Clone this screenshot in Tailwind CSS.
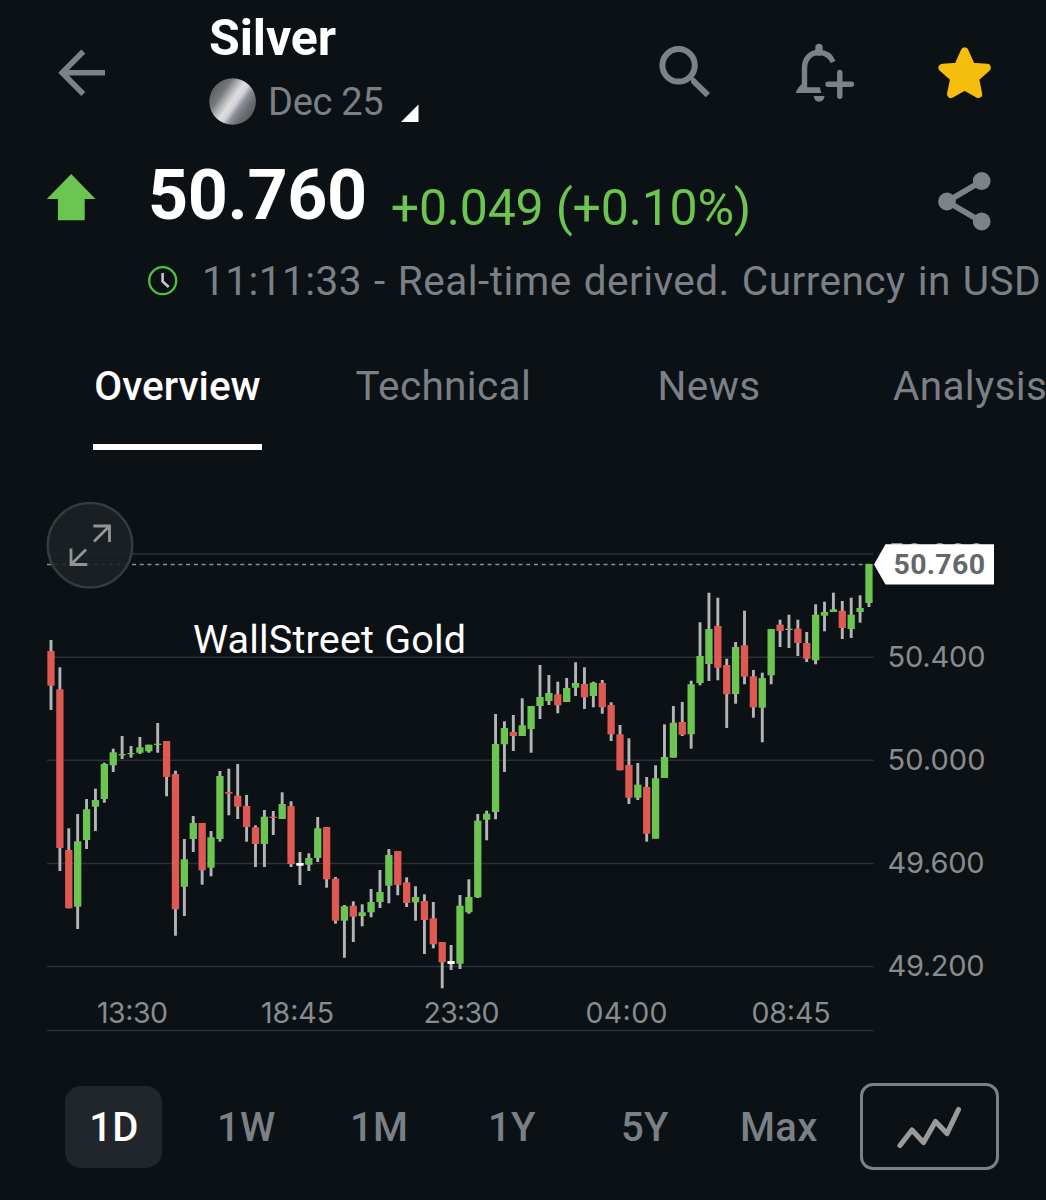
<!DOCTYPE html>
<html lang="en">
<head>
<meta charset="utf-8">
<title>Silver Dec 25</title>
<script src="https://cdn.jsdelivr.net/npm/@tailwindcss/browser@4"></script>
</head>
<body class="bg-[#0c1115] overflow-hidden">
<main class="w-[1046px] h-[1200px] overflow-hidden bg-[#0c1115] font-['Roboto',sans-serif] text-[#7b8086] whitespace-nowrap flex flex-col">

  <header class="h-[154px] shrink-0 flex items-start border-b border-[#0a0e12]">
    <svg class="ml-[56px] mt-[46px] w-[52px] h-[54px] shrink-0" viewBox="56 46 52 54" fill="none" stroke="#7d8288" stroke-width="5.6"><path d="M105 72.7H63M83.300 51.500 62.200 72.700 83.300 93.900"/></svg>
    <div class="ml-[101px] mt-[13px] w-[230px] flex flex-col">
      <h1 class="text-[50px] leading-[50px] font-bold text-white tracking-[-0.100px]">Silver</h1>
      <div class="flex items-start mt-[13px]">
        <svg class="w-[48px] h-[50px] shrink-0" viewBox="209 76 48 50">
          <defs><linearGradient id="metal" x1="0.1" y1="0.22" x2="0.9" y2="0.78"><stop offset="0" stop-color="#5d6265"/><stop offset=".2" stop-color="#74787a"/><stop offset=".36" stop-color="#b5b6b8"/><stop offset=".48" stop-color="#dedee0"/><stop offset=".58" stop-color="#d2d2d8"/><stop offset=".7" stop-color="#8d8e9b"/><stop offset=".84" stop-color="#6d7174"/><stop offset="1" stop-color="#5c6063"/></linearGradient></defs>
          <circle cx="232.600" cy="101.500" r="23.300" fill="url(#metal)"/>
        </svg>
        <span class="ml-[11px] mt-[5px] text-[38px] leading-[42px] tracking-[-0.300px]">Dec 25</span>
        <svg class="ml-auto mr-[19px] mt-[28px] w-[19px] h-[19px] shrink-0" viewBox="401 104 19 19"><path d="M418.500 104.500V122H401z" fill="#fff"/></svg>
      </div>
    </div>
    <svg class="ml-[217px] mt-[42px] w-[60px] h-[60px] shrink-0" viewBox="656 42 60 60" fill="none" stroke="#7d8288"><circle cx="678.600" cy="65.300" r="16.200" stroke-width="6"/><path d="M690.500 78.500 694 77.500 710 93 705.800 97.200 691.500 83.200z" fill="#7d8288" stroke="none"/></svg>
    <svg class="ml-[76px] mt-[40px] w-[66px] h-[66px] shrink-0" viewBox="792 40 66 66" fill="none" stroke="#7d8288">
      <path d="M804.500 88V68C804.500 59 810 52.500 819 52.500C825.500 52.500 830.500 56 833 62" stroke-width="5.400"/>
      <path d="M819 52V47.500" stroke-width="7.400" stroke-linecap="round"/>
      <path d="M802 84 807.200 87.200H819.800L821.300 93H796C796.300 89.500 799 86.500 802 84z" fill="#7d8288" stroke="none"/>
      <path d="M813.800 96H824.500C824.300 99.500 822 101.700 819.100 101.700C816.200 101.700 814 99.500 813.800 96z" fill="#7d8288" stroke="none"/>
      <path d="M828 84.200H851.500M839.800 72.500V96.300" stroke-width="5.400" stroke-linecap="round"/>
    </svg>
    <svg class="ml-[76px] mt-[42px] w-[62px] h-[62px] shrink-0" viewBox="934 42 62 62"><path d="M964.700 51.500 971.500 66.800 986.800 67.700 975 78.300 978.200 94 964.700 86.300 951 94 954.300 78.300 942.500 67.700 957.800 66.800z" fill="#f5bd0c" stroke="#f5bd0c" stroke-width="8" stroke-linejoin="round"/></svg>
  </header>

  <section class="h-[180px] shrink-0 flex flex-col">
    <div class="h-[94px] flex items-start">
      <svg class="ml-[46px] mt-[18px] w-[52px] h-[52px] shrink-0" viewBox="46 172 52 52"><path d="M71.200 174 95.500 199H84.700V220.300H57.900V199H46.800z" fill="#6cc550"/></svg>
      <span class="ml-[50px] mt-[6px] text-[70px] leading-[70px] font-bold text-white tracking-[-0.400px]">50.760</span>
      <span class="ml-[24px] mt-[24px] text-[50px] leading-[60px] tracking-[-0.200px] text-[#6cc550]">+0.049 (+0.10%)</span>
      <svg class="ml-auto mr-[52px] mt-[16px] w-[60px] h-[62px] shrink-0" viewBox="934 170 60 62" fill="#7d8288"><path d="M982 181 947 201.500 982 222" fill="none" stroke="#7d8288" stroke-width="5.600"/><circle cx="981.700" cy="181" r="8.900"/><circle cx="947" cy="201.500" r="8.900"/><circle cx="981.700" cy="221.500" r="8.900"/></svg>
    </div>
    <div class="h-[66px] flex items-center">
      <svg class="ml-[147px] w-[32px] h-[32px] shrink-0" viewBox="147 265 32 32" fill="none"><circle cx="162.700" cy="280.700" r="13.500" stroke="#4dc040" stroke-width="2.300"/><path d="M162.600 273V281.500L168.700 287" stroke="#c9c6cc" stroke-width="2.600"/></svg>
      <span class="ml-[23px] text-[40.500px] leading-[48px] tracking-[0.480px] [word-spacing:1.5px]">11:11:33 - Real-time derived. Currency in USD</span>
    </div>
  </section>

  <nav class="h-[130px] shrink-0 flex items-start pt-[22px] pl-[93px] text-[40.500px] leading-[61px] tracking-[0.350px]">
    <div class="w-[169px] shrink-0 h-[93.500px] border-b-[6px] border-white font-medium text-white text-center tracking-[0px]">Overview</div>
    <span class="ml-[93.500px] w-[302px] shrink-0">Technical</span>
    <span class="w-[235.500px] shrink-0">News</span>
    <span>Analysis</span>
  </nav>

  <section class="h-[596px] shrink-0">
    <svg class="w-[1046px] h-[596px]" viewBox="0 464 1046 596">
      <g stroke="#2c3135" stroke-width="1.500"><path d="M47 554H873.500M47 657.200H873.500M47 760.300H873.500M47 863.400H873.500M47 966.500H873.500"/><path d="M47 1030.500H873.500" stroke="#27323c"/></g>
      <path d="M47 564.500H873" stroke="#8b8e90" stroke-width="1.500" stroke-dasharray="4 3.730"/>
      <g id="candles"></g>
      <circle cx="90" cy="545.300" r="42.300" fill="#1c2125" fill-opacity=".88" stroke="#363b3e" stroke-width="2.500"/>
      <path d="M93.300 526H109.500V542M109.500 526 94 541.500M71 548.500V564.500H87.300M71 564.500 86 549.500" fill="none" stroke="#929596" stroke-width="2.800"/>
      <g font-family="Inter, sans-serif" font-weight="400" font-size="29" fill="#898c8f">
        <text x="887.500" y="564" textLength="98">50.800</text>
        <text x="887.500" y="667" textLength="98">50.400</text>
        <text x="887.500" y="770" textLength="98">50.000</text>
        <text x="887.500" y="873" textLength="97">49.600</text>
        <text x="887.500" y="976" textLength="97">49.200</text>
        <g font-size="28.500">
        <text x="97" y="1023" textLength="71">13:30</text>
        <text x="261" y="1023" textLength="73">18:45</text>
        <text x="423.500" y="1023" textLength="76">23:30</text>
        <text x="585.500" y="1023" textLength="82">04:00</text>
        <text x="751.500" y="1023" textLength="79">08:45</text>
        </g>
      </g>
      <path d="M874 564.500 885.500 544.300H994V584.500H885.500z" fill="#fff"/>
      <text x="893.500" y="574" textLength="91.500" font-weight="700" font-size="28.500" fill="#64686b">50.760</text>
      <text x="193" y="653" textLength="273" font-size="39.500" fill="#fff">WallStreet Gold</text>
    </svg>
  </section>

  <section class="h-[140px] shrink-0 flex items-start pt-[23px] pl-[65px] text-[40px] leading-[84px] font-medium tracking-[0.300px]">
    <div class="mt-[3px] w-[97px] h-[82px] rounded-[16px] bg-[#20262c] pl-[1px] text-white text-center">1D</div>
    <span class="mt-[3px] ml-[55px] w-[133px]">1W</span>
    <span class="mt-[3px] w-[138px]">1M</span>
    <span class="mt-[3px] w-[133px]">1Y</span>
    <span class="mt-[3px] w-[119px]">5Y</span>
    <span class="mt-[3px] w-[120px]">Max</span>
    <div class="w-[139px] h-[87px] rounded-[13px] border-[3px] border-[#7b8287] flex items-center justify-center">
      <svg class="w-[70px] h-[50px]" viewBox="895 1101 70 50" fill="none" stroke="#9b9a99" stroke-width="5.200" stroke-linecap="round" stroke-linejoin="round"><path d="M900 1144.500 912 1129 923.500 1141.500 935.500 1120.500 947 1132.500 958.500 1108.500"/></svg>
    </div>
  </section>
</main>
<script>
// [direction, high, body top, body bottom, low] for each 15-minute candle
const candles = [
['r',640,651,685.7,710],['r',667.3,689.3,848,871],['r',828.3,850,908.3,908.3],['g',814,841.3,906.7,929],['g',799,809.3,840,849],['g',788.7,800,806.7,831],['g',762.7,764,799,802.7],['g',748.7,752.3,765.3,772],['g',736,754,755.3,759],['g',746,753,754.2,757.7],['g',737,747.3,752.7,754],['g',744.7,744.7,751.3,752.7],['g',723,743.7,745,752.7],['r',741,741,777,796.3],['r',770.7,774,909.3,935.7],['g',839,859.3,886.7,916],['g',816,823,839,852],['r',823,823,870.3,884.7],['g',831,837.3,867.7,876.3],['g',771,776,839,841.7],['r',768.7,792,793.7,815.3],['r',764,795.7,806.7,819],['r',795,806,827,841.7],['r',825.3,827.3,844,867],['g',810,816.7,844,867],['r',811,816.7,818,835],['g',792.3,804,819,819],['r',801.3,806,864,867],['w',852,863,865.7,885],['g',853.3,858,864.7,871],['g',817,828.3,858,862],['r',827,827,879.3,887.7],['r',877,878.7,920.7,923.7],['g',905,906.3,920.7,957.7],['r',901.3,905.7,916.7,942],['g',904.3,912.3,916,926.3],['g',889,902,912.3,917.3],['g',870,892,902,908],['g',849,855,885.7,903.3],['r',851,851,885,895.3],['r',877.3,882.3,903,907],['g',886.3,897,902.3,920.7],['r',894.3,901,920,954],['r',902,918.3,944.3,948.3],['r',942,942,962.3,988.3],['w',945,961,964,970],['g',895,905.7,963.7,969],['g',879.3,897,912.3,913.7],['g',814,820.7,897.3,898],['g',810.7,813.7,819.7,840.3],['g',714,744,812,819.3],['g',721.3,728,744.3,772],['r',715,732,736,751],['g',698.3,725.3,736,736],['g',706,706,729,752.7],['g',665,697,706,719],['g',675,693,701,705],['r',681.7,694.3,705.3,713.3],['g',678,688,702,702],['g',662.3,683,687.7,696],['r',667.3,684,697.3,709],['g',681.7,682.7,696,707.3],['r',680,683,707.3,713.7],['r',702.3,705,734.3,741],['r',725,734.3,770.3,770.3],['r',738.3,765,797.7,804],['g',763,784.7,797.7,800],['r',777,787,833.7,841.7],['g',765.3,778.3,838.7,838.7],['g',724.3,757,778,778],['g',706,722.7,757.7,757.7],['r',702,722,734.7,736],['g',680.7,684.3,734.3,748.7],['g',622.3,656,683,685.3],['g',592.7,629,664,681],['r',597.7,626,667.7,680.3],['r',658.7,665,694.3,728],['g',642,647,694,703.7],['r',610.7,645.3,676.7,684.3],['r',670,676.3,707.3,717.7],['g',672.7,678,707.7,742.3],['g',629,629,675.3,684.3],['r',619.7,624.7,631,647],['g',614.7,628.7,630,648],['r',619.7,628.7,643,656],['r',632,643,658.7,662],['g',604.3,614.7,660.3,664.3],['g',601.7,612,615.7,631.3],['g',592.7,609.3,612,612],['r',601,610.7,628,639],['g',597.7,614.7,629,638],['g',595.3,608,612,622.7],['g',564,564,603,607]
];
const fill = { r: '#e05852', g: '#6cc551', w: '#ffffff' };
document.getElementById('candles').innerHTML = candles.map(([d, hi, top, bottom, lo], i) => {
  const x = 51 + i * 8.891;
  return `<rect x="${x - 1.45}" y="${hi}" width="2.9" height="${lo - hi}" fill="#b3b4b6"/>` +
         `<rect x="${x - 3.65}" y="${top}" width="7.3" height="${bottom - top}" fill="${fill[d]}"/>`;
}).join('');
</script>
</body>
</html>
